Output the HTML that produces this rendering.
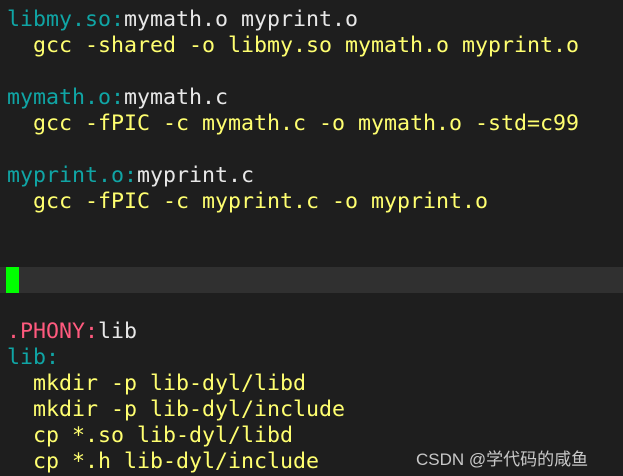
<!DOCTYPE html>
<html><head><meta charset="utf-8"><style>
html,body{margin:0;padding:0;background:#1e1e1e;width:623px;height:476px;overflow:hidden;position:relative}
.l{position:absolute;left:7px;height:26px;line-height:26px;font-family:"DejaVu Sans Mono","Liberation Mono",monospace;font-size:21.6px;white-space:pre;color:#e8e8e8}
.c{color:#10a5a5}.y{color:#ffff70}.p{color:#ff5a7e}
.cur{position:absolute;left:0;top:267px;width:623px;height:26px;background:#303030}
.blk{position:absolute;left:6px;top:267px;width:13px;height:26px;background:#00ff00}
.wm{position:absolute;left:416px;top:445px;font-family:"Liberation Sans","Noto Sans CJK SC",sans-serif;font-size:17px;color:#c8c8c8}
</style></head><body>
<div class="cur"></div><div class="blk"></div>
<div class="l" style="top:7px"><span class="c">libmy.so:</span>mymath.o myprint.o</div>
<div class="l y" style="top:33px">  gcc -shared -o libmy.so mymath.o myprint.o</div>
<div class="l" style="top:85px"><span class="c">mymath.o:</span>mymath.c</div>
<div class="l y" style="top:111px">  gcc -fPIC -c mymath.c -o mymath.o -std=c99</div>
<div class="l" style="top:163px"><span class="c">myprint.o:</span>myprint.c</div>
<div class="l y" style="top:189px">  gcc -fPIC -c myprint.c -o myprint.o</div>
<div class="l" style="top:319px"><span class="p">.PHONY:</span>lib</div>
<div class="l c" style="top:345px">lib:</div>
<div class="l y" style="top:371px">  mkdir -p lib-dyl/libd</div>
<div class="l y" style="top:397px">  mkdir -p lib-dyl/include</div>
<div class="l y" style="top:423px">  cp *.so lib-dyl/libd</div>
<div class="l y" style="top:449px">  cp *.h lib-dyl/include</div>
<div class="wm">CSDN @学代码的咸鱼</div>
</body></html>
